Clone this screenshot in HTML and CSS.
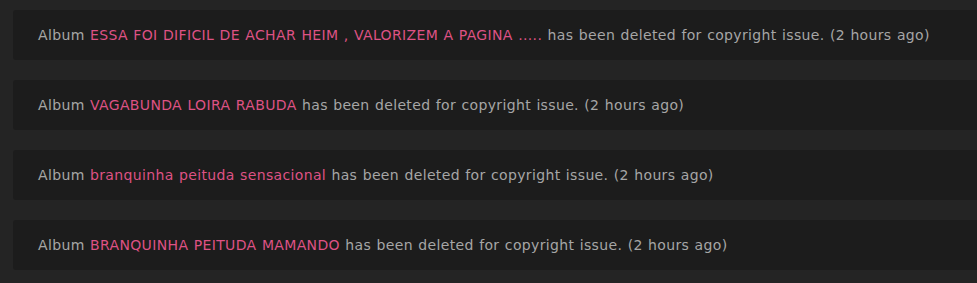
FILE: index.html
```html
<!DOCTYPE html>
<html>
<head>
<meta charset="utf-8">
<link rel="stylesheet" href="styles.css">
</head>
<body>
<div class="list">
  <div class="item">Album <a class="name" href="#">ESSA FOI DIFICIL DE ACHAR HEIM , VALORIZEM A PAGINA .....</a> has been deleted for copyright issue. (2 hours ago)</div>
  <div class="item">Album <a class="name" href="#">VAGABUNDA LOIRA RABUDA</a> has been deleted for copyright issue. (2 hours ago)</div>
  <div class="item">Album <a class="name" href="#">branquinha peituda sensacional</a> has been deleted for copyright issue. (2 hours ago)</div>
  <div class="item">Album <a class="name" href="#">BRANQUINHA PEITUDA MAMANDO</a> has been deleted for copyright issue. (2 hours ago)</div>
</div>
</body>
</html>
```
FILE: styles.css
```css
html, body {
  margin: 0;
  padding: 0;
  background: #242424;
  overflow: hidden;
}
.list {
  display: flex;
  flex-direction: column;
  gap: 20px;
  padding: 10px 0 0 13px;
  margin-right: -20px;
}
.item {
  height: 50px;
  box-sizing: border-box;
  display: flex;
  align-items: center;
  white-space: pre;
  padding-left: 25px;
  background: #1c1c1c;
  border-radius: 3px;
  color: #a6a6a6;
  font-family: "DejaVu Sans", sans-serif;
  font-size: 14px;
  letter-spacing: 0.35px;
  word-spacing: 0.6px;
}
.name {
  color: #de5284;
  text-decoration: none;
}
```
